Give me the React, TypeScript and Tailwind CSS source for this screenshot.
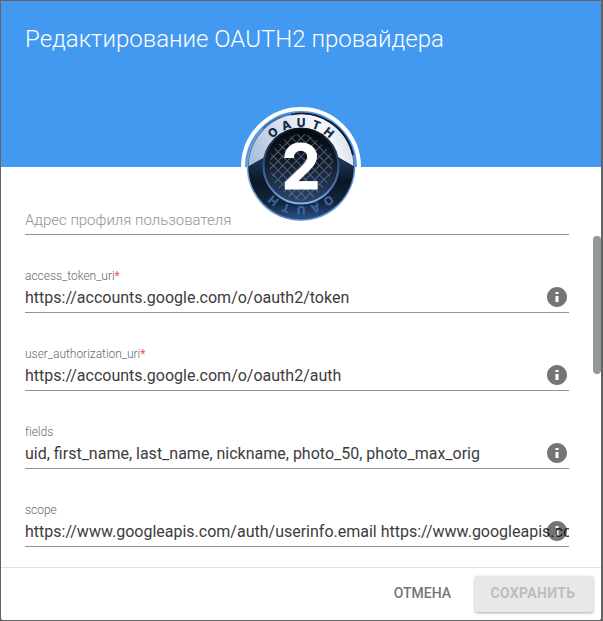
function InfoIcon() {
  return (
    <svg viewBox="0 0 24 24" className="absolute top-[3px] right-0 size-6 text-black/54" fill="currentColor">
      <path fillRule="evenodd" d="M12 2C6.480 2 2 6.480 2 12s4.480 10 10 10 10-4.480 10-10S17.520 2 12 2zM10.500 7h3v2h-3zM10.500 11h3v6h-3z" />
    </svg>
  );
}

type FieldProps = { label: string; value: string; required?: boolean };

function Field({ label, value, required }: FieldProps) {
  return (
    <div className="h-[78px] pt-[35px]">
      <div className="h-3 text-xs leading-3 font-light tracking-[-0.02px] whitespace-nowrap text-[#5d6b76]">
        {label}
        {required && <span className="font-normal text-[#f4564c]">*</span>}
      </div>
      <div className="relative h-[31px] border-b border-[#949494]">
        <div className="overflow-hidden pt-[5px] text-base leading-[21px] whitespace-nowrap text-[#3c3c3c]">
          {value}
        </div>
        <InfoIcon />
      </div>
    </div>
  );
}

const ringLetters = [
  { char: "O", angle: -39 },
  { char: "A", angle: -19.5 },
  { char: "U", angle: 0 },
  { char: "T", angle: 20 },
  { char: "H", angle: 39 },
];

function OAuthBadge() {
  return (
    <svg viewBox="0 0 120 120" className="size-[120px]">
      <defs>
        <linearGradient id="silver" x1="0" y1="0.4" x2="1" y2="0.2">
          <stop offset="0" stopColor="#a9bedd" />
          <stop offset="0.4" stopColor="#dfe7f3" />
          <stop offset="0.7" stopColor="#f5f8fc" />
          <stop offset="1" stopColor="#c3cfdf" />
        </linearGradient>
        <linearGradient id="navy" x1="0" y1="0" x2="0" y2="1">
          <stop offset="0.45" stopColor="#1c3353" />
          <stop offset="0.65" stopColor="#0b1626" />
          <stop offset="0.85" stopColor="#13263f" />
          <stop offset="1" stopColor="#2a5288" />
        </linearGradient>
        <linearGradient id="rim" x1="0" y1="0" x2="1" y2="1">
          <stop offset="0" stopColor="#4b93df" />
          <stop offset="0.3" stopColor="#82a9d9" />
          <stop offset="0.65" stopColor="#5d85b8" />
          <stop offset="1" stopColor="#6ba5e8" />
        </linearGradient>
        <linearGradient id="core" x1="0" y1="0" x2="0" y2="1">
          <stop offset="0" stopColor="#05080d" />
          <stop offset="0.45" stopColor="#111c2c" />
          <stop offset="1" stopColor="#2b466d" />
        </linearGradient>
        <linearGradient id="coreRim" x1="0" y1="0" x2="0" y2="1">
          <stop offset="0" stopColor="#0b121d" />
          <stop offset="0.4" stopColor="#2c4a76" />
          <stop offset="0.75" stopColor="#4a74ac" />
          <stop offset="1" stopColor="#86b2e8" />
        </linearGradient>
        <pattern id="mesh" width="6.500" height="6.500" patternUnits="userSpaceOnUse" patternTransform="translate(60 58) rotate(45)">
          <path d="M0 .5H6.500M.5 0V6.500" stroke="#77859a" strokeWidth="0.800" strokeDasharray="1.600 .5" fill="none" />
        </pattern>
        <clipPath id="outer"><circle cx="60" cy="59.500" r="52.500" /></clipPath>
      </defs>
      <circle cx="60" cy="60" r="58" fill="none" stroke="#fff" strokeWidth="4" />
      <circle cx="60" cy="59.500" r="54.300" fill="url(#rim)" />
      <circle cx="60" cy="59.500" r="52.800" fill="url(#navy)" />
      <path d="M6 60L24 50L60 30L97 50L116 61V0H0V60Z" fill="url(#silver)" clipPath="url(#outer)" />
      <path d="M50 7.500A53 53 0 0 1 112 48" stroke="#101925" strokeWidth="1.800" fill="none" />
      <path d="M22 21.500A53 53 0 0 1 54 6.500" stroke="#315d94" strokeWidth="1.200" fill="none" />
      <circle cx="60" cy="59" r="37.500" fill="url(#core)" stroke="url(#coreRim)" strokeWidth="2" />
      <path d="M60 26L74 31L90 46L93 58L86 77L73 90L60 94L46 89L33 76L28 58L31 44L45 31Z" fill="url(#mesh)" />
      {ringLetters.map(({ char, angle }) => (
        <text key={char} x="60" y="19.800" transform={`rotate(${angle} 60 60)`} textAnchor="middle" className="fill-[#172a44] font-[Inter] text-[12px] font-extrabold">
          {char}
        </text>
      ))}
      {ringLetters.map(({ char, angle }) => (
        <text key={char} x="60" y="19.800" transform={`rotate(${angle + 180} 60 59.500)`} textAnchor="middle" className="fill-[#3d639a] font-[Inter] text-[12px] font-extrabold">
          {char}
        </text>
      ))}
      <text x="60" y="82" textAnchor="middle" className="fill-white stroke-white stroke-[0.8px] font-[Inter] text-[62px] font-bold">2</text>
    </svg>
  );
}

export default function App() {
  return (
    <div className="h-[621px] w-[603px] bg-[#636363] pt-px pr-[2px] pb-px pl-px font-[Roboto,sans-serif]">
      <div className="flex h-[619px] flex-col overflow-hidden rounded-[2px] bg-white">
        <header className="relative z-10 h-[166px] shrink-0 bg-[#4398f0] px-6 pt-[22px]">
          <h1 className="text-2xl leading-8 font-light whitespace-nowrap text-white">Редактирование OAUTH2 провайдера</h1>
          <div className="absolute top-[106px] left-[240px] h-[60px] w-[120px]">
            <OAuthBadge />
          </div>
        </header>
        <main className="relative h-[400px] shrink-0 overflow-hidden pr-8 pl-6">
          <div className="h-[68px] border-b border-[#949494] pt-[42px] text-[15px] leading-[22px] font-light tracking-[-0.01px] whitespace-nowrap text-[#949494]">
            Адрес профиля пользователя
          </div>
          <Field label="access_token_uri" value="https://accounts.google.com/o/oauth2/token" required />
          <Field label="user_authorization_uri" value="https://accounts.google.com/o/oauth2/auth" required />
          <Field label="fields" value="uid, first_name, last_name, nickname, photo_50, photo_max_orig" />
          <Field label="scope" value="https://www.googleapis.com/auth/userinfo.email https://www.googleapis.com/auth/userinfo.profile" />
          <div className="absolute top-[69px] right-0 h-[138px] w-2 rounded-full bg-[#93999b]" />
        </main>
        <footer className="flex flex-1 items-start justify-end gap-4 border-t border-[#e0e0e0] pt-2 pr-2">
          <button className="h-9 px-2 pb-0.5 text-sm font-medium text-[#757575]">ОТМЕНА</button>
          <button className="h-9 w-[118px] rounded-[2px] bg-[#e8e8e8] pr-0.5 pb-0.5 text-sm font-bold tracking-[0.34px] text-[#bdbdbd] shadow-[0_1px_3px_rgba(0,0,0,0.35)]">СОХРАНИТЬ</button>
        </footer>
      </div>
    </div>
  );
}
